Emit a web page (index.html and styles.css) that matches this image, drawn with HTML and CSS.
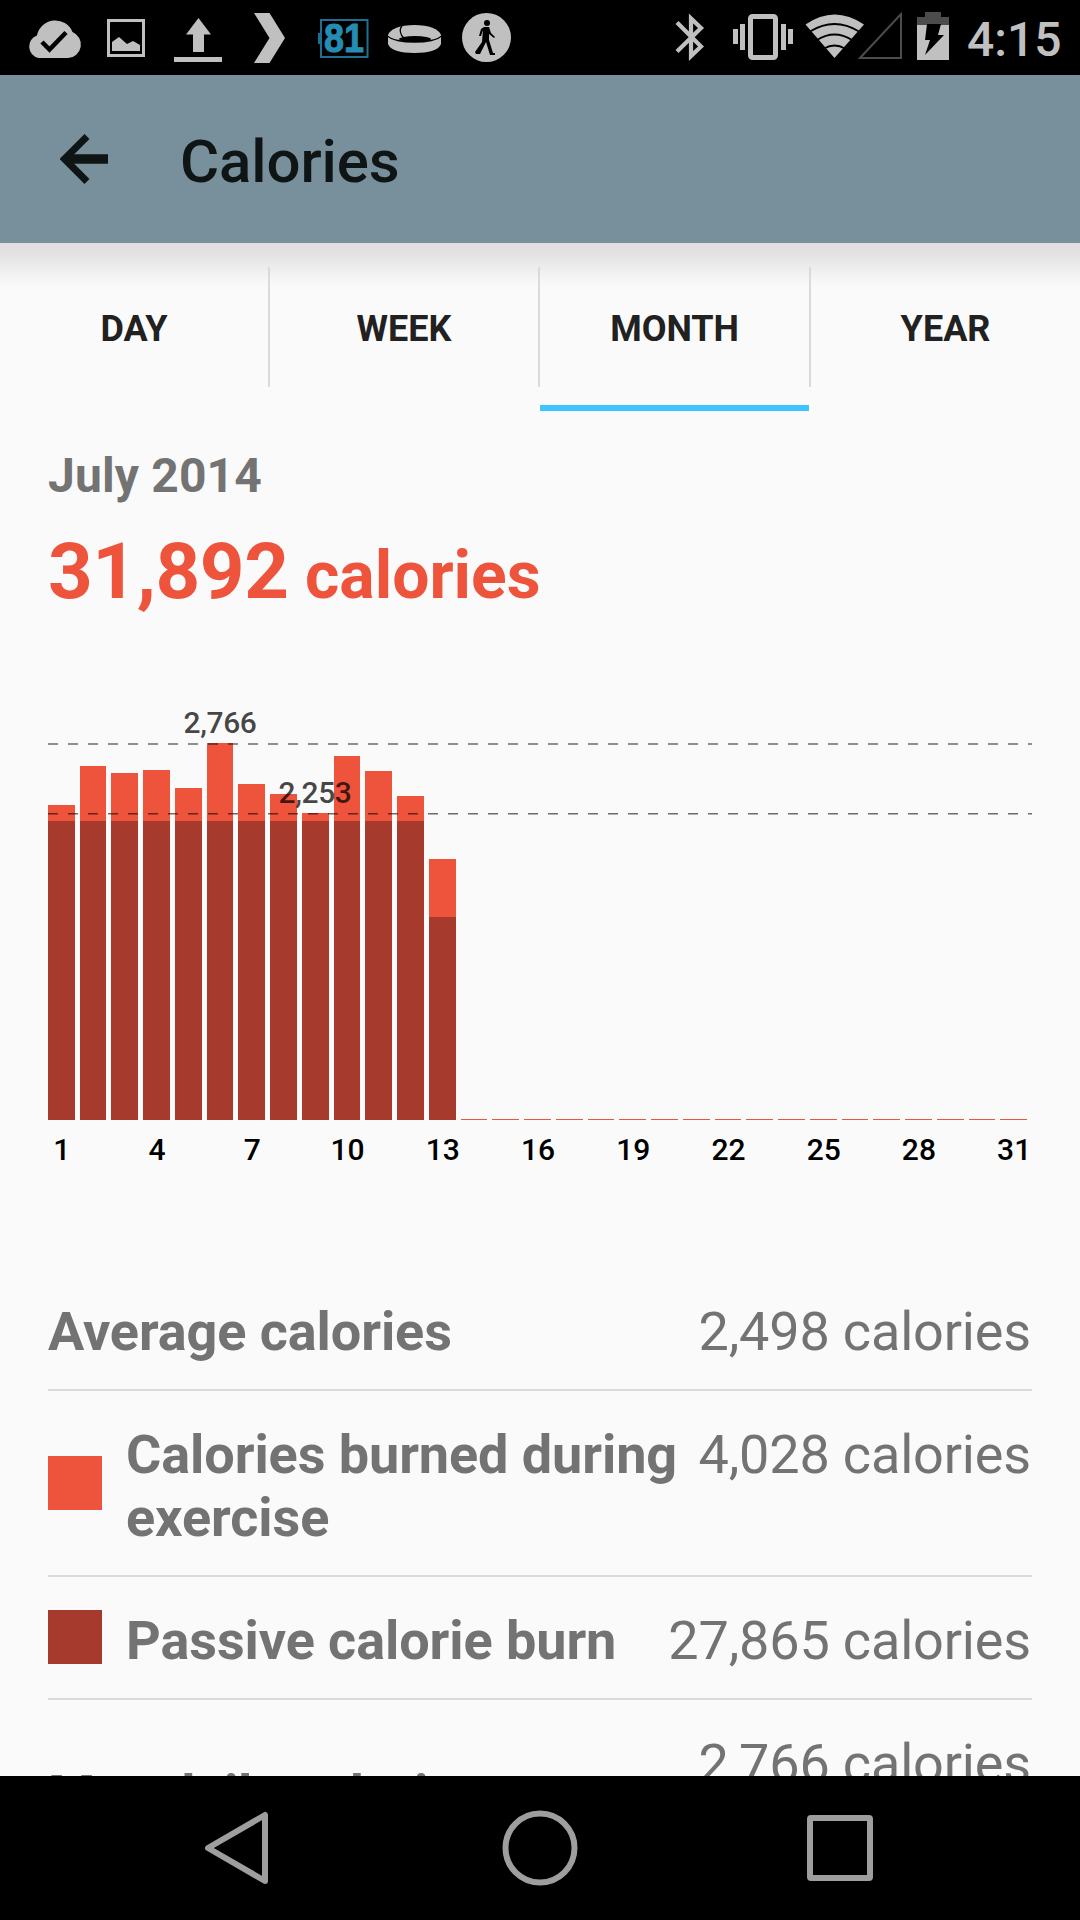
FILE: index.html
```html
<!DOCTYPE html>
<html lang="en">
<head>
  <meta charset="UTF-8">
  <meta name="viewport" content="width=device-width, initial-scale=1.0">
  <title>Calories</title>
  <link rel="stylesheet" href="styles.css">
</head>
<body>
  <div class="statusbar">
    <!-- notifications -->
    <svg class="notifications" width="520" height="75" viewBox="0 0 520 75">
      <path fill="#c0c0c0" d="M38.500 58a11.700 11.700 0 0 1-1.500-22.500a18.600 18.600 0 0 1 35.500-3.500A13.500 13.500 0 0 1 68 58z"/>
      <path fill="none" stroke="#000" stroke-width="4.500" d="M42 42l7.500 7.500L66 32.500"/>
      <rect x="108.500" y="20.500" width="35" height="35" fill="none" stroke="#c0c0c0" stroke-width="3"/>
      <path fill="#c0c0c0" d="M112 51V42l7-5 8 7 6-3 7 4v6z"/>
      <path fill="#c0c0c0" d="M198.500 18l12.500 16.500h-7V52h-11V34.500h-7zM174 57h48v5h-48z"/>
      <path fill="#c0c0c0" d="M254 13h15.500L285 38l-15.500 25H254l15.500-25z"/>
      <rect x="321" y="20" width="46.500" height="37" fill="none" stroke="#1f6f90" stroke-width="2"/>
      <path fill="#1f6f90" d="M318 33h3v11h-3z"/>
      <text class="notif-count" x="324" y="52" textLength="40" lengthAdjust="spacingAndGlyphs">81</text>
      <path fill="#c0c0c0" d="M388 35c2-6 12-10 26.500-10S439 29 441 35v9c-2 6-12 9-26.500 9S390 50 388 44z"/>
      <ellipse cx="415" cy="39" rx="16" ry="3"/>
      <path fill="none" stroke="#000" stroke-width="1.300" d="M388 36c5 8 48 8 53 0M402 26c-3 3-2 9 2 12"/>
      <circle cx="486.500" cy="37.500" r="24.500" fill="#c0c0c0"/>
      <circle cx="487" cy="23" r="3"/>
      <path d="M484 27h5l2 6 4 4-1 1-5-4v6l4 13h2v2h-5l-4-13-6 12h-4l-1-2 7-10 1-12-2 6h-2l2-7z"/>
    </svg>
    <!-- system state -->
    <div class="system">
      <svg width="280" height="75" viewBox="670 0 280 75">
        <path fill="none" stroke="#c0c0c0" stroke-width="4.200" d="M677 22.500L701 46.500 691 56V18.500L701 28 677 51.500"/>
        <rect x="750.500" y="16.500" width="25" height="41" rx="2" fill="none" stroke="#c0c0c0" stroke-width="5"/>
        <path fill="#c0c0c0" d="M733 29h5v15h-5zM740 24h5v26h-5zM781 24h5v26h-5zM788 29h5v15h-5z"/>
        <path fill="#c0c0c0" d="M834.500 58l-29-33.500q29-20 58.500 0z"/>
        <path fill="none" stroke="#000" stroke-width="2" d="M810 31.500q24.500-15 49 0M817 40q17.500-11 35 0M824 48.500q10.500-6 21 0"/>
        <path fill="none" stroke="#4c4c4c" stroke-width="2" d="M860 58L901 14v44z"/>
        <path fill="#4c4c4c" d="M917 25v-8h8v-5h16v5h8v8z"/>
        <path fill="#c0c0c0" d="M917 25h32v35h-32z"/>
        <path d="M927 24h14l-3 11h6l-19 20 5-15h-5z"/>
      </svg>
      <span class="clock">4:15</span>
    </div>
  </div>

  <header class="appbar">
    <svg class="back" width="48" height="50" viewBox="0 0 48 50">
      <path fill="none" stroke="#0f1415" stroke-width="7" d="M27 2.500L4.500 25 27 47.500"/>
      <path fill="none" stroke="#0f1415" stroke-width="9.500" d="M6 25h42"/>
    </svg>
    <h1>Calories</h1>
  </header>

  <main class="content">
    <nav class="tabs">
      <a class="tab">DAY</a>
      <a class="tab">WEEK</a>
      <a class="tab active">MONTH</a>
      <a class="tab">YEAR</a>
    </nav>

    <section class="summary">
      <h2>July 2014</h2>
      <p class="total">31,892<span> calories</span></p>
    </section>

    <section class="chart">
      <div class="bars" id="bars"></div>
      <svg class="guides" width="984" height="377" viewBox="0 0 984 377">
        <path d="M0 1H984M0 70.750H984"/>
      </svg>
      <span class="peak peak-max">2,766</span>
      <span class="peak peak-min">2,253</span>
      <div class="axis" id="axis"></div>
    </section>

    <section class="stats">
      <div class="row">
        <span class="label">Average calories</span>
        <span class="value">2,498 calories</span>
      </div>
      <div class="row">
        <i class="swatch exercise"></i>
        <span class="label">Calories burned during exercise</span>
        <span class="value">4,028 calories</span>
      </div>
      <div class="row">
        <i class="swatch passive"></i>
        <span class="label">Passive calorie burn</span>
        <span class="value">27,865 calories</span>
      </div>
      <div class="row">
        <span class="label">Max daily calories</span>
        <span class="value">2,766 calories<br>Jul 6</span>
      </div>
    </section>
  </main>

  <footer class="navbar">
    <svg width="1080" height="144" viewBox="0 0 1080 144">
      <g fill="none" stroke="#9e9e9e" stroke-width="6" stroke-linejoin="round">
        <path d="M265 39v66L208 72z"/>
        <circle cx="540" cy="72" r="34.500"/>
        <rect x="810" y="42" width="60" height="60" rx="1"/>
      </g>
    </svg>
  </footer>

  <script>
    // [total height, passive height] per day, in px
    const days = [
      [315, 299], [354, 299], [347, 299], [350, 299], [332, 299], [377, 299], [336, 299],
      [326, 299], [307, 299], [364, 299], [349, 299], [324, 299], [261, 203]
    ];
    const bars = document.getElementById('bars');
    const axis = document.getElementById('axis');

    for (let d = 1; d <= 31; d++) {
      const [total, passive] = days[d - 1] || [1, 0];
      const bar = document.createElement('div');
      bar.className = 'bar';
      bar.style.height = total + 'px';
      bar.innerHTML = `<div class="burn" style="height: ${passive}px"></div>`;
      bars.appendChild(bar);

      // every third day gets a label
      const tick = document.createElement('span');
      tick.textContent = d % 3 === 1 ? d : '';
      axis.appendChild(tick);
    }
  </script>
</body>
</html>
```
FILE: styles.css
```css
body {
  margin: 0;
  height: 1920px;
  display: flex;
  flex-direction: column;
  overflow: hidden;
  background-color: #fafafa;
  font-family: Roboto, sans-serif;
  color: #737373;
}
svg {
  display: block;
}
.statusbar {
  flex: none;
  height: 75px;
  display: flex;
  justify-content: space-between;
  background-color: #000;
}
.notif-count {
  font: bold 40px "Liberation Sans", sans-serif;
  fill: #258db3;
  stroke: #258db3;
  stroke-width: 1;
}
.system {
  display: flex;
  width: 410px;
}
.clock {
  margin-left: 17px;
  line-height: 79px;
  font-size: 48px;
  font-weight: 500;
  color: #c0c0c0;
}
.appbar {
  flex: none;
  height: 168px;
  display: flex;
  align-items: center;
  background-color: #78909c;
}
.back {
  margin-left: 60px;
}
.appbar h1 {
  margin: 4px 0 0 72px;
  font-size: 60px;
  font-weight: 500;
  letter-spacing: -0.1px;
  color: #0f1415;
}
.content {
  flex: 1;
  min-height: 0;
  overflow: hidden;
  background: linear-gradient(to bottom, #dfdfdf, #e3e3e3 11px, #fafafa 43px);
}
.tabs {
  display: grid;
  grid-template-columns: 270px 270px 271px 269px;
  height: 120px;
  padding-top: 24px;
}
.tab {
  box-sizing: border-box;
  height: 120px;
  border-right: 2px solid #dadada;
  line-height: 124px;
  text-align: center;
  font-size: 36px;
  font-weight: bold;
  color: #212121;
}
.tab:last-child {
  border-right: none;
}
.tab.active {
  letter-spacing: -0.1px;
}
.tab.active::after {
  content: "";
  display: block;
  height: 6px;
  margin-top: 14px;
  background-color: #40c4ff;
}
.summary {
  padding: 61px 48px 0;
}
.summary h2 {
  margin: 0;
  font-size: 48px;
  line-height: 56px;
  letter-spacing: 0.15px;
}
.total {
  margin: 22px 0 0;
  font-size: 78px;
  line-height: 92px;
  font-weight: bold;
  letter-spacing: -0.4px;
  color: #ee533c;
}
.total span {
  font-size: 66px;
  line-height: 1;
  letter-spacing: 0;
}
.chart {
  position: relative;
  margin: 125px 48px 0;
}
.bars {
  display: grid;
  grid-template-columns: repeat(31, 1fr);
  align-items: end;
  height: 377px;
}
.bar {
  display: flex;
  align-items: flex-end;
  margin-right: 5px;
  background-color: #ee533c;
}
.burn {
  width: 100%;
  background-color: #a53a2d;
}
.guides {
  position: absolute;
  top: 0;
  left: 0;
  fill: none;
  stroke: rgba(0, 0, 0, 0.57);
  stroke-width: 1.5;
  stroke-dasharray: 10 10;
}
.peak {
  position: absolute;
  font-size: 30px;
  line-height: 36px;
  font-weight: 500;
  letter-spacing: -0.4px;
  color: rgba(0, 0, 0, 0.73);
  transform: translateX(-50%);
}
.peak-max {
  top: -38px;
  left: 172px;
}
.peak-min {
  top: 32px;
  left: 267px;
}
.axis {
  display: grid;
  grid-template-columns: repeat(31, 1fr);
  height: 36px;
  margin-top: 12px;
  line-height: 36px;
  font-size: 30px;
  font-weight: 500;
  color: #000;
}
.axis span {
  display: flex;
  justify-content: center;
  min-width: 0;
  margin-right: 4px;
}
.stats {
  margin: 100px 48px 0;
}
.row {
  display: flex;
  align-items: center;
  border-bottom: 2px solid #dadada;
  font-size: 54px;
  line-height: 63px;
}
.label {
  flex: 1;
  padding: 32px 0 26px;
  font-weight: bold;
  letter-spacing: -0.08px;
}
.row:last-child .label {
  margin-bottom: 1px;
}
.value {
  align-self: flex-start;
  padding: 32px 1px 26px 0;
  text-align: right;
  letter-spacing: -0.17px;
}
.swatch {
  width: 54px;
  height: 54px;
  margin: 0 24px 1px 0;
}
.exercise {
  background-color: #ee533c;
}
.passive {
  background-color: #a53a2d;
}
.navbar {
  flex: none;
  height: 144px;
  background-color: #000;
}
```
